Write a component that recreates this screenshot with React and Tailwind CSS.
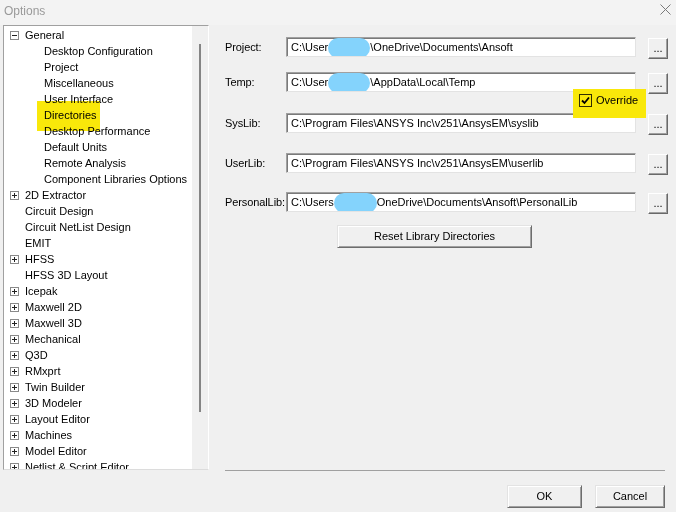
import React from 'react';

const tree = [
  { label: 'General', box: '-' },
  { label: 'Desktop Configuration', child: true },
  { label: 'Project', child: true },
  { label: 'Miscellaneous', child: true },
  { label: 'User Interface', child: true },
  { label: 'Directories', child: true, mark: true },
  { label: 'Desktop Performance', child: true },
  { label: 'Default Units', child: true },
  { label: 'Remote Analysis', child: true },
  { label: 'Component Libraries Options', child: true },
  { label: '2D Extractor', box: '+' },
  { label: 'Circuit Design' },
  { label: 'Circuit NetList Design' },
  { label: 'EMIT' },
  { label: 'HFSS', box: '+' },
  { label: 'HFSS 3D Layout' },
  { label: 'Icepak', box: '+' },
  { label: 'Maxwell 2D', box: '+' },
  { label: 'Maxwell 3D', box: '+' },
  { label: 'Mechanical', box: '+' },
  { label: 'Q3D', box: '+' },
  { label: 'RMxprt', box: '+' },
  { label: 'Twin Builder', box: '+' },
  { label: '3D Modeler', box: '+' },
  { label: 'Layout Editor', box: '+' },
  { label: 'Machines', box: '+' },
  { label: 'Model Editor', box: '+' },
  { label: 'Netlist & Script Editor', box: '+' },
];

const Expander = ({ sign }) => (
  <svg width="9" height="9" viewBox="0 0 9 9" className="shrink-0">
    <rect x="0.5" y="0.5" width="8" height="8" fill="white" stroke="#8a8a8a" />
    <line x1="2" y1="4.5" x2="7" y2="4.5" stroke="#222" />
    {sign === '+' && <line x1="4.5" y1="2" x2="4.5" y2="7" stroke="#222" />}
  </svg>
);

const Blob = ({ w = 42 }) => (
  <span className="inline-block h-[20px] rounded-full bg-[#84d3fc] align-middle -my-[3px]" style={{ width: w }} />
);

const DotsButton = () => (
  <button className="w-[20px] h-[21px] mt-[1px] ml-[12px] shrink-0 bg-[#f0f0f0] border border-t-white border-l-white border-r-[#696969] border-b-[#696969] shadow-[inset_-1px_-1px_0_#a0a0a0] text-[11px] leading-none flex items-end justify-center pb-[4px] text-black">
    ...
  </button>
);

const PathRow = ({ label, children, className = '' }) => (
  <div className={`flex items-start h-[20px] ${className}`}>
    <div className="w-[61px] h-[20px] flex items-center shrink-0 whitespace-nowrap tracking-[-0.1px]">{label}</div>
    <div className="w-[350px] h-[20px] bg-white border border-t-[#a0a0a0] border-l-[#a0a0a0] border-r-[#e3e3e3] border-b-[#e3e3e3] shadow-[inset_1px_1px_0_#7a7a7a] pl-[4px] flex items-center whitespace-nowrap overflow-hidden">
      <span>{children}</span>
    </div>
    <DotsButton />
  </div>
);

const WinButton = ({ children, className = '' }) => (
  <button className={`h-[23px] bg-[#f0f0f0] border border-t-[#e3e3e3] border-l-[#e3e3e3] border-r-[#6d6d6d] border-b-[#6d6d6d] shadow-[inset_1px_1px_0_white,inset_-1px_-1px_0_#a0a0a0] text-[11px] text-black ${className}`}>
    {children}
  </button>
);

export default function App() {
  return (
    <div className="w-[676px] h-[512px] bg-[#f0f0f0] text-[11px] text-black font-['Liberation_Sans',Arial,sans-serif] flex flex-col overflow-hidden">
      {/* title bar */}
      <div className="h-[25px] bg-[#f3f3f3] flex items-center justify-between pl-[4px] pr-[5px] shrink-0">
        <span className="text-[12px] text-[#9a9a9a] -mt-[4px]">Options</span>
        <svg width="11" height="11" viewBox="0 0 11 11" className="-mt-[6px]">
          <path d="M0.5 0.5 L10.5 10.5 M10.5 0.5 L0.5 10.5" stroke="#7a7a7a" strokeWidth="1" />
        </svg>
      </div>

      <div className="flex h-[445px] shrink-0">
        {/* tree */}
        <div className="ml-[3px] w-[206px] h-full flex border border-t-[#a0a0a0] border-l-[#a0a0a0] border-r-white border-b-[#dcdcdc] shadow-[inset_0_1px_0_#8a8a8a]">
          <div className="flex-1 bg-white pt-[1px] overflow-hidden">
            {tree.map((item) => (
              <div key={item.label} className="h-[16px] flex items-center whitespace-nowrap">
                {item.child ? (
                  <span className="ml-[40px] relative">
                    {item.mark && (
                      <span className="absolute -left-[7px] -top-[6px] w-[63px] h-[30px] bg-[#f9e80a] mix-blend-multiply" />
                    )}
                    <span className="relative">{item.label}</span>
                  </span>
                ) : (
                  <span className="ml-[6px] flex items-center">
                    {item.box ? <Expander sign={item.box} /> : <span className="w-[9px]" />}
                    <span className="ml-[6px]">{item.label}</span>
                  </span>
                )}
              </div>
            ))}
          </div>
          <div className="w-[16px] bg-[#f0f0f0] pt-[18px]">
            <div className="ml-[7px] w-[2px] h-[368px] bg-[#858585]" />
          </div>
        </div>

        {/* directories panel */}
        <div className="flex-1 pl-[16px] flex flex-col">
          <PathRow label="Project:" className="mt-[12px]">
            C:\User<Blob />\OneDrive\Documents\Ansoft
          </PathRow>
          <PathRow label="Temp:" className="mt-[15px]">
            C:\User<Blob />\AppData\Local\Temp
          </PathRow>
          <div className="mt-[2px] h-[13px] flex relative z-10">
            <div className="ml-[354px] relative flex items-center h-[13px] leading-none">
              <span className="absolute -left-[6px] -top-[5px] w-[73px] h-[29px] bg-[#f9e80a] mix-blend-multiply" />
              <span className="w-[13px] h-[13px] border border-[#333] bg-white flex items-center justify-center">
                <svg width="9" height="9" viewBox="0 0 9 9">
                  <path d="M1 4.5 L3.5 7 L8 1.5" fill="none" stroke="black" strokeWidth="1.8" />
                </svg>
              </span>
              <span className="ml-[4px]">Override</span>
            </div>
          </div>
          <PathRow label="SysLib:" className="mt-[6px]">
            C:\Program Files\ANSYS Inc\v251\AnsysEM\syslib
          </PathRow>
          <PathRow label="UserLib:" className="mt-[20px]">
            C:\Program Files\ANSYS Inc\v251\AnsysEM\userlib
          </PathRow>
          <PathRow label="PersonalLib:" className="mt-[19px]">
            C:\Users<Blob w={43} />OneDrive\Documents\Ansoft\PersonalLib
          </PathRow>
          <WinButton className="mt-[13px] ml-[112px] w-[195px]">Reset Library Directories</WinButton>
        </div>
      </div>

      {/* footer */}
      <div className="ml-[225px] w-[440px] h-px bg-[#a0a0a0] shrink-0" />
      <div className="flex justify-end gap-[13px] pr-[11px] mt-[14px]">
        <WinButton className="w-[75px]">OK</WinButton>
        <WinButton className="w-[70px]">Cancel</WinButton>
      </div>
    </div>
  );
}
